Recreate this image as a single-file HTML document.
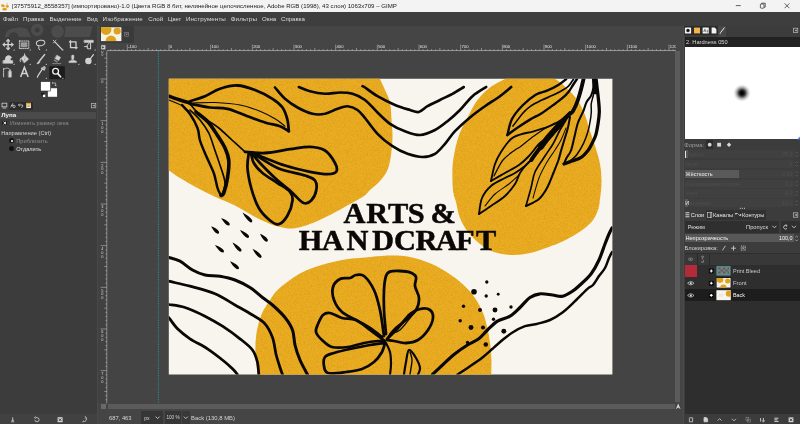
<!DOCTYPE html>
<html lang="ru"><head><meta charset="utf-8"><title>GIMP</title>
<style>
html,body{margin:0;padding:0;}
body{width:800px;height:424px;overflow:hidden;position:relative;background:#454545;font-family:"Liberation Sans",sans-serif;font-size:5.8px;color:#d8d8d8;}
.a{position:absolute;white-space:nowrap;line-height:1;}
.t{position:absolute;white-space:nowrap;line-height:8px;height:8px;opacity:.999;}
.b{position:absolute;}
svg{position:absolute;left:0;top:0;overflow:visible;opacity:.999;}
</style></head><body>
<div class="b" style="left:0.00px;top:0.00px;width:800.00px;height:12.00px;background:#f3f3f3;"></div>
<div class="t" style="left:12.00px;top:2.20px;font-size:6.10px;color:#1a1a1a;">[37575912_8558357] (импортировано)-1.0 (Цвета RGB 8 бит, нелинейное целочисленное, Adobe RGB (1998), 43 слоя) 1063x709 – GIMP</div>
<svg width="800" height="424" viewBox="0 0 800 424"><g fill="none" stroke="#222" stroke-width="0.7">
<path d="M735.8 5.6H740.8"/>
<rect x="760.4" y="4" width="3.6" height="4.2" rx="0.7"/><path d="M761.6 4V3.2H765.2V7.2H764.2"/>
<path d="M784.6 3.4L789.4 8.2M789.4 3.4L784.6 8.2"/>
<g stroke="none"><rect x="0.9" y="3" width="8.2" height="7.4" fill="#f4f2ee"/><ellipse cx="2.9" cy="5.7" rx="2" ry="1.4" fill="#e0a41a" transform="rotate(20 2.9 5.7)"/><ellipse cx="7.3" cy="6.3" rx="1.4" ry="1.5" fill="#e0a41a"/><ellipse cx="4.6" cy="9.2" rx="2.4" ry="1.2" fill="#dfa010"/><path d="M5.2 4.2L6.6 3.4L8.2 3L7.6 4.6Z" fill="#c9c9c9"/></g>
</g></svg>
<div class="b" style="left:0.00px;top:12.00px;width:800.00px;height:13.60px;background:#3e3e3e;"></div>
<div class="t" style="left:3.00px;top:15.20px;font-size:6.10px;color:#dadada;">Файл</div>
<div class="t" style="left:23.00px;top:15.20px;font-size:6.20px;letter-spacing:0.009px;color:#dadada;">Правка</div>
<div class="t" style="left:49.60px;top:15.20px;font-size:6.04px;color:#dadada;">Выделение</div>
<div class="t" style="left:87.00px;top:15.20px;font-size:5.86px;color:#dadada;">Вид</div>
<div class="t" style="left:102.60px;top:15.20px;font-size:6.20px;letter-spacing:0.122px;color:#dadada;">Изображение</div>
<div class="t" style="left:148.20px;top:15.20px;font-size:6.17px;color:#dadada;">Слой</div>
<div class="t" style="left:168.00px;top:15.20px;font-size:5.93px;color:#dadada;">Цвет</div>
<div class="t" style="left:186.00px;top:15.20px;font-size:6.20px;letter-spacing:0.122px;color:#dadada;">Инструменты</div>
<div class="t" style="left:230.75px;top:15.20px;font-size:6.20px;letter-spacing:0.145px;color:#dadada;">Фильтры</div>
<div class="t" style="left:262.00px;top:15.20px;font-size:6.11px;color:#dadada;">Окна</div>
<div class="t" style="left:281.00px;top:15.20px;font-size:6.12px;color:#dadada;">Справка</div>
<div class="b" style="left:0.00px;top:25.00px;width:97.40px;height:399.00px;background:#3c3c3c;"></div>
<div class="b" style="left:97.40px;top:25.00px;width:1.00px;height:399.00px;background:#494949;"></div>
<div class="b" style="left:9.00px;top:101.60px;width:23.80px;height:8.30px;background:#2b2b2b;"></div>
<div class="b" style="left:0.00px;top:111.60px;width:96.40px;height:7.00px;background:#4a4a4a;"></div>
<div class="t" style="left:1.20px;top:111.40px;font-size:6.20px;letter-spacing:0.001px;color:#f4f4f4;font-weight:bold;">Лупа</div>
<div class="b" style="left:2.40px;top:120.60px;width:4.80px;height:4.80px;background:#1f1f1f;border-radius:0.8px;"></div>
<div class="t" style="left:10.00px;top:119.00px;font-size:5.59px;color:#8c8c8c;">Изменять размер окна</div>
<div class="t" style="left:1.20px;top:128.80px;font-size:5.72px;color:#d4d4d4;">Направление (Ctrl)</div>
<div class="b" style="left:8.80px;top:137.90px;width:5.40px;height:5.40px;background:#141414;border-radius:50%;"></div>
<div class="b" style="left:10.50px;top:139.60px;width:2.00px;height:2.00px;background:#fff;border-radius:50%;"></div>
<div class="t" style="left:16.20px;top:136.70px;font-size:5.75px;color:#8c8c8c;">Приблизить</div>
<div class="b" style="left:8.80px;top:146.10px;width:5.40px;height:5.40px;background:#141414;border-radius:50%;"></div>
<div class="t" style="left:16.20px;top:144.90px;font-size:5.60px;color:#e2e2e2;">Отдалить</div>
<div class="b" style="left:0.00px;top:414.20px;width:96.50px;height:9.80px;background:#414141;"></div>
<div class="b" style="left:99.50px;top:25.60px;width:34.00px;height:17.00px;background:#3a3a3a;"></div>
<div class="b" style="left:98.40px;top:51.00px;width:9.00px;height:352.40px;background:#414141;"></div>
<div class="b" style="left:107.30px;top:51.00px;width:567.60px;height:352.40px;background:#444444;"></div>
<div class="b" style="left:107.50px;top:404.00px;width:567.40px;height:5.00px;background:#5b5b5b;"></div>
<div class="b" style="left:101.20px;top:403.80px;width:4.60px;height:5.20px;background:#6a6a6a;"></div>
<div class="b" style="left:675.20px;top:51.00px;width:5.30px;height:351.40px;background:#5b5b5b;"></div>
<div class="t" style="left:109.00px;top:414.00px;font-size:5.80px;color:#d4d4d4;">687, 463</div>
<div class="b" style="left:141.00px;top:411.40px;width:22.40px;height:12.60px;background:#363636;"></div>
<div class="t" style="left:144.20px;top:414.00px;font-size:5.11px;color:#d4d4d4;">px</div>
<div class="b" style="left:165.00px;top:411.40px;width:16.40px;height:12.60px;background:#363636;"></div>
<div class="t" style="left:166.40px;top:414.20px;font-size:4.65px;color:#d4d4d4;">100 %</div>
<div class="b" style="left:182.00px;top:411.40px;width:7.60px;height:12.60px;background:#383838;"></div>
<div class="t" style="left:191.00px;top:414.00px;font-size:5.92px;color:#d4d4d4;">Back (130,8 МБ)</div>
<div class="b" style="left:682.60px;top:25.00px;width:1.00px;height:399.00px;background:#4b4b4b;"></div>
<div class="b" style="left:683.60px;top:25.00px;width:117.00px;height:399.00px;background:#3c3c3c;"></div>
<div class="b" style="left:684.20px;top:26.40px;width:33.40px;height:8.20px;background:#2b2b2b;"></div>
<div class="b" style="left:717.60px;top:25.60px;width:8.60px;height:11.00px;background:#474747;"></div>
<div class="b" style="left:684.60px;top:36.60px;width:115.40px;height:10.40px;background:#222;"></div>
<div class="t" style="left:686.00px;top:37.80px;font-size:5.68px;color:#d8d8d8;">2. Hardness 050</div>
<div class="b" style="left:685.00px;top:47.00px;width:115.00px;height:92.40px;background:#fff;"></div>
<div class="b" style="left:732.60px;top:84.00px;width:18.00px;height:18.00px;background:radial-gradient(circle closest-side,#000 0%,#050505 16%,rgba(0,0,0,0.78) 36%,rgba(0,0,0,0.4) 56%,rgba(0,0,0,0.14) 76%,rgba(0,0,0,0.03) 90%,rgba(0,0,0,0) 100%);"></div>
<div class="t" style="left:684.20px;top:140.80px;font-size:5.89px;color:#9a9a9a;">Форма:</div>
<div class="b" style="left:706.00px;top:140.40px;width:7.40px;height:8.60px;background:#2c2c2c;"></div>
<div class="b" style="left:684.60px;top:150.10px;width:109.40px;height:8.40px;background:#404040;"></div>
<div class="b" style="left:684.60px;top:150.10px;width:3.20px;height:8.40px;background:#5a5a5a;"></div>
<div class="t" style="left:685.60px;top:150.30px;font-size:5.50px;color:#4e4e4e;">Радиус</div>
<div class="t" style="left:0.00px;top:150.30px;font-size:5.50px;color:#4e4e4e;left:auto;right:7.4px;">25,0</div>
<div class="b" style="left:684.60px;top:159.90px;width:109.40px;height:8.40px;background:#404040;"></div>
<div class="t" style="left:685.60px;top:160.10px;font-size:5.50px;color:#4e4e4e;">Лучи</div>
<div class="t" style="left:0.00px;top:160.10px;font-size:5.50px;color:#4e4e4e;left:auto;right:7.4px;">2</div>
<div class="b" style="left:684.60px;top:169.70px;width:109.40px;height:8.40px;background:#404040;"></div>
<div class="b" style="left:684.60px;top:169.70px;width:54.70px;height:8.40px;background:#5a5a5a;"></div>
<div class="t" style="left:685.60px;top:169.90px;font-size:5.50px;color:#f0f0f0;">Жёсткость</div>
<div class="t" style="left:0.00px;top:169.90px;font-size:5.50px;color:#4e4e4e;left:auto;right:7.4px;">0,50</div>
<div class="b" style="left:684.60px;top:179.50px;width:109.40px;height:8.40px;background:#404040;"></div>
<div class="t" style="left:685.60px;top:179.70px;font-size:5.50px;color:#4e4e4e;">Соотношение сторон</div>
<div class="t" style="left:0.00px;top:179.70px;font-size:5.50px;color:#4e4e4e;left:auto;right:7.4px;">1,0</div>
<div class="b" style="left:684.60px;top:189.20px;width:109.40px;height:8.40px;background:#404040;"></div>
<div class="t" style="left:685.60px;top:189.40px;font-size:5.50px;color:#4e4e4e;">Угол</div>
<div class="t" style="left:0.00px;top:189.40px;font-size:5.50px;color:#4e4e4e;left:auto;right:7.4px;">0,0</div>
<div class="b" style="left:684.60px;top:198.90px;width:109.40px;height:8.40px;background:#404040;"></div>
<div class="b" style="left:684.60px;top:198.90px;width:3.20px;height:8.40px;background:#5a5a5a;"></div>
<div class="t" style="left:685.60px;top:199.10px;font-size:5.50px;color:#4e4e4e;">Интервал</div>
<div class="t" style="left:0.00px;top:199.10px;font-size:5.50px;color:#4e4e4e;left:auto;right:7.4px;">10,0</div>
<div class="b" style="left:685.40px;top:150.60px;width:0.80px;height:7.40px;background:#e8e8e8;"></div>
<div class="t" style="left:685.20px;top:199.10px;font-size:5.50px;color:#e8e8e8;">И</div>
<div class="b" style="left:706.00px;top:210.40px;width:27.60px;height:9.20px;background:#313131;"></div>
<div class="b" style="left:734.60px;top:210.40px;width:31.60px;height:9.20px;background:#313131;"></div>
<div class="t" style="left:690.80px;top:211.20px;font-size:5.51px;color:#f0f0f0;">Слои</div>
<div class="t" style="left:713.00px;top:211.20px;font-size:5.63px;color:#e8e8e8;">Каналы</div>
<div class="t" style="left:742.00px;top:211.20px;font-size:5.71px;color:#e8e8e8;">Контуры</div>
<div class="b" style="left:684.60px;top:220.60px;width:94.40px;height:12.40px;background:#2f2f2f;border-radius:1px;"></div>
<div class="b" style="left:780.60px;top:220.60px;width:19.40px;height:12.40px;background:#2f2f2f;border-radius:1px;"></div>
<div class="t" style="left:687.70px;top:223.00px;font-size:5.58px;color:#dcdcdc;">Режим</div>
<div class="t" style="left:746.00px;top:223.00px;font-size:5.79px;color:#dcdcdc;">Пропуск</div>
<div class="b" style="left:684.60px;top:234.40px;width:109.40px;height:8.00px;background:#585858;"></div>
<div class="t" style="left:685.40px;top:234.40px;font-size:5.67px;color:#f4f4f4;">Непрозрачность</div>
<div class="t" style="left:779.00px;top:234.40px;font-size:5.43px;color:#f4f4f4;">100,0</div>
<div class="t" style="left:684.60px;top:244.20px;font-size:5.81px;color:#d4d4d4;">Блокировка:</div>
<div class="b" style="left:684.60px;top:253.00px;width:115.40px;height:160.60px;background:#2e2e2e;"></div>
<div class="b" style="left:684.60px;top:253.60px;width:115.40px;height:11.20px;background:#383838;"></div>
<div class="b" style="left:696.60px;top:253.60px;width:0.60px;height:11.20px;background:#2a2a2a;"></div>
<div class="b" style="left:708.60px;top:253.60px;width:0.60px;height:11.20px;background:#2a2a2a;"></div>
<div class="b" style="left:684.60px;top:264.80px;width:12.00px;height:12.20px;background:#b32a38;"></div>
<div class="b" style="left:684.60px;top:289.20px;width:115.40px;height:12.20px;background:#1d1d1d;"></div>
<div class="t" style="left:733.00px;top:267.00px;font-size:5.52px;color:#c8c8c8;">Print Bleed</div>
<div class="t" style="left:733.00px;top:279.20px;font-size:5.83px;color:#c8c8c8;">Front</div>
<div class="t" style="left:733.00px;top:291.40px;font-size:5.40px;color:#f4f4f4;">Back</div>
<svg width="800" height="424" viewBox="0 0 800 424">
<defs><clipPath id="hr"><rect x="107" y="43.4" width="569" height="8"/></clipPath><clipPath id="vr"><rect x="99.6" y="51" width="8" height="352.4"/></clipPath></defs>
<rect x="101" y="27.3" width="20.4" height="13.8" fill="#f6f2e8"/>
<g clip-path="url(#thc)"><clipPath id="thc"><rect x="101" y="27.3" width="20.4" height="13.8"/></clipPath><circle cx="106" cy="29.5" r="5.4" fill="#dfa21c"/><circle cx="117.2" cy="31" r="3.6" fill="#dfa21c"/><circle cx="111" cy="41" r="5.4" fill="#dfa21c"/></g>
<rect x="124.8" y="32.4" width="3.6" height="3.8" fill="none" stroke="#9a9a9a" stroke-width="0.5"/><path d="M125.8 33.5L127.4 35.1M127.4 33.5L125.8 35.1" stroke="#cfcfcf" stroke-width="0.5"/>
<rect x="101.2" y="45.2" width="4.2" height="4.2" fill="#cfcfcf"/><path d="M102.2 46.2L104.4 47.3L102.2 48.4Z" fill="#333"/>
<g clip-path="url(#hr)" stroke="#d0d0d0" stroke-width="0.5" fill="#cfcfcf" font-size="4.2" font-family="'Liberation Sans',sans-serif">
<path d="M107 50.6H676" stroke-width="0.6"/>
<path d="M85.67 44.6V50.6"/>
<text x="86.47" y="48.1" stroke="none" fill="#e4e4e4">-200</text>
<path d="M89.83 49.20V50.6"/>
<path d="M94.00 49.20V50.6"/>
<path d="M98.17 49.20V50.6"/>
<path d="M102.33 49.20V50.6"/>
<path d="M106.50 48.00V50.6"/>
<path d="M110.67 49.20V50.6"/>
<path d="M114.83 49.20V50.6"/>
<path d="M119.00 49.20V50.6"/>
<path d="M123.17 49.20V50.6"/>
<path d="M127.33 44.6V50.6"/>
<text x="128.13" y="48.1" stroke="none" fill="#e4e4e4">-100</text>
<path d="M131.50 49.20V50.6"/>
<path d="M135.67 49.20V50.6"/>
<path d="M139.83 49.20V50.6"/>
<path d="M144.00 49.20V50.6"/>
<path d="M148.17 48.00V50.6"/>
<path d="M152.33 49.20V50.6"/>
<path d="M156.50 49.20V50.6"/>
<path d="M160.67 49.20V50.6"/>
<path d="M164.83 49.20V50.6"/>
<path d="M169.00 44.6V50.6"/>
<text x="169.80" y="48.1" stroke="none" fill="#e4e4e4">0</text>
<path d="M173.17 49.20V50.6"/>
<path d="M177.33 49.20V50.6"/>
<path d="M181.50 49.20V50.6"/>
<path d="M185.67 49.20V50.6"/>
<path d="M189.83 48.00V50.6"/>
<path d="M194.00 49.20V50.6"/>
<path d="M198.17 49.20V50.6"/>
<path d="M202.33 49.20V50.6"/>
<path d="M206.50 49.20V50.6"/>
<path d="M210.67 44.6V50.6"/>
<text x="211.47" y="48.1" stroke="none" fill="#e4e4e4">100</text>
<path d="M214.83 49.20V50.6"/>
<path d="M219.00 49.20V50.6"/>
<path d="M223.17 49.20V50.6"/>
<path d="M227.33 49.20V50.6"/>
<path d="M231.50 48.00V50.6"/>
<path d="M235.67 49.20V50.6"/>
<path d="M239.83 49.20V50.6"/>
<path d="M244.00 49.20V50.6"/>
<path d="M248.17 49.20V50.6"/>
<path d="M252.33 44.6V50.6"/>
<text x="253.13" y="48.1" stroke="none" fill="#e4e4e4">200</text>
<path d="M256.50 49.20V50.6"/>
<path d="M260.67 49.20V50.6"/>
<path d="M264.83 49.20V50.6"/>
<path d="M269.00 49.20V50.6"/>
<path d="M273.17 48.00V50.6"/>
<path d="M277.33 49.20V50.6"/>
<path d="M281.50 49.20V50.6"/>
<path d="M285.67 49.20V50.6"/>
<path d="M289.83 49.20V50.6"/>
<path d="M294.00 44.6V50.6"/>
<text x="294.80" y="48.1" stroke="none" fill="#e4e4e4">300</text>
<path d="M298.17 49.20V50.6"/>
<path d="M302.33 49.20V50.6"/>
<path d="M306.50 49.20V50.6"/>
<path d="M310.67 49.20V50.6"/>
<path d="M314.83 48.00V50.6"/>
<path d="M319.00 49.20V50.6"/>
<path d="M323.17 49.20V50.6"/>
<path d="M327.33 49.20V50.6"/>
<path d="M331.50 49.20V50.6"/>
<path d="M335.67 44.6V50.6"/>
<text x="336.47" y="48.1" stroke="none" fill="#e4e4e4">400</text>
<path d="M339.83 49.20V50.6"/>
<path d="M344.00 49.20V50.6"/>
<path d="M348.17 49.20V50.6"/>
<path d="M352.33 49.20V50.6"/>
<path d="M356.50 48.00V50.6"/>
<path d="M360.67 49.20V50.6"/>
<path d="M364.83 49.20V50.6"/>
<path d="M369.00 49.20V50.6"/>
<path d="M373.17 49.20V50.6"/>
<path d="M377.34 44.6V50.6"/>
<text x="378.14" y="48.1" stroke="none" fill="#e4e4e4">500</text>
<path d="M381.50 49.20V50.6"/>
<path d="M385.67 49.20V50.6"/>
<path d="M389.84 49.20V50.6"/>
<path d="M394.00 49.20V50.6"/>
<path d="M398.17 48.00V50.6"/>
<path d="M402.34 49.20V50.6"/>
<path d="M406.50 49.20V50.6"/>
<path d="M410.67 49.20V50.6"/>
<path d="M414.84 49.20V50.6"/>
<path d="M419.00 44.6V50.6"/>
<text x="419.80" y="48.1" stroke="none" fill="#e4e4e4">600</text>
<path d="M423.17 49.20V50.6"/>
<path d="M427.34 49.20V50.6"/>
<path d="M431.50 49.20V50.6"/>
<path d="M435.67 49.20V50.6"/>
<path d="M439.84 48.00V50.6"/>
<path d="M444.00 49.20V50.6"/>
<path d="M448.17 49.20V50.6"/>
<path d="M452.34 49.20V50.6"/>
<path d="M456.50 49.20V50.6"/>
<path d="M460.67 44.6V50.6"/>
<text x="461.47" y="48.1" stroke="none" fill="#e4e4e4">700</text>
<path d="M464.84 49.20V50.6"/>
<path d="M469.00 49.20V50.6"/>
<path d="M473.17 49.20V50.6"/>
<path d="M477.34 49.20V50.6"/>
<path d="M481.50 48.00V50.6"/>
<path d="M485.67 49.20V50.6"/>
<path d="M489.84 49.20V50.6"/>
<path d="M494.00 49.20V50.6"/>
<path d="M498.17 49.20V50.6"/>
<path d="M502.34 44.6V50.6"/>
<text x="503.14" y="48.1" stroke="none" fill="#e4e4e4">800</text>
<path d="M506.50 49.20V50.6"/>
<path d="M510.67 49.20V50.6"/>
<path d="M514.84 49.20V50.6"/>
<path d="M519.00 49.20V50.6"/>
<path d="M523.17 48.00V50.6"/>
<path d="M527.34 49.20V50.6"/>
<path d="M531.50 49.20V50.6"/>
<path d="M535.67 49.20V50.6"/>
<path d="M539.84 49.20V50.6"/>
<path d="M544.00 44.6V50.6"/>
<text x="544.80" y="48.1" stroke="none" fill="#e4e4e4">900</text>
<path d="M548.17 49.20V50.6"/>
<path d="M552.34 49.20V50.6"/>
<path d="M556.50 49.20V50.6"/>
<path d="M560.67 49.20V50.6"/>
<path d="M564.84 48.00V50.6"/>
<path d="M569.00 49.20V50.6"/>
<path d="M573.17 49.20V50.6"/>
<path d="M577.34 49.20V50.6"/>
<path d="M581.50 49.20V50.6"/>
<path d="M585.67 44.6V50.6"/>
<text x="586.47" y="48.1" stroke="none" fill="#e4e4e4">1000</text>
<path d="M589.84 49.20V50.6"/>
<path d="M594.00 49.20V50.6"/>
<path d="M598.17 49.20V50.6"/>
<path d="M602.34 49.20V50.6"/>
<path d="M606.50 48.00V50.6"/>
<path d="M610.67 49.20V50.6"/>
<path d="M614.84 49.20V50.6"/>
<path d="M619.00 49.20V50.6"/>
<path d="M623.17 49.20V50.6"/>
<path d="M627.34 44.6V50.6"/>
<text x="628.14" y="48.1" stroke="none" fill="#e4e4e4">1100</text>
<path d="M631.50 49.20V50.6"/>
<path d="M635.67 49.20V50.6"/>
<path d="M639.84 49.20V50.6"/>
<path d="M644.00 49.20V50.6"/>
<path d="M648.17 48.00V50.6"/>
<path d="M652.34 49.20V50.6"/>
<path d="M656.50 49.20V50.6"/>
<path d="M660.67 49.20V50.6"/>
<path d="M664.84 49.20V50.6"/>
<path d="M669.00 44.6V50.6"/>
<text x="669.80" y="48.1" stroke="none" fill="#e4e4e4">1200</text>
<path d="M673.17 49.20V50.6"/>
<path d="M677.34 49.20V50.6"/>
<path d="M681.50 49.20V50.6"/>
<path d="M685.67 49.20V50.6"/>
<path d="M689.84 48.00V50.6"/>
<path d="M694.00 49.20V50.6"/>
<path d="M698.17 49.20V50.6"/>
<path d="M702.34 49.20V50.6"/>
<path d="M706.50 49.20V50.6"/>
</g>
<g clip-path="url(#vr)" stroke="#d0d0d0" stroke-width="0.5" fill="#d8d8d8" font-size="3.9" font-family="'Liberation Sans',sans-serif">
<path d="M106.9 51V403.4" stroke-width="0.6"/>
<path d="M100.6 37.33H106.9"/>
<text x="101.2" y="41.53" stroke="none">-</text>
<text x="101.2" y="45.43" stroke="none">1</text>
<text x="101.2" y="49.33" stroke="none">0</text>
<text x="101.2" y="53.23" stroke="none">0</text>
<path d="M105.50 41.50H106.9"/>
<path d="M105.50 45.67H106.9"/>
<path d="M105.50 49.83H106.9"/>
<path d="M105.50 54.00H106.9"/>
<path d="M104.30 58.17H106.9"/>
<path d="M105.50 62.33H106.9"/>
<path d="M105.50 66.50H106.9"/>
<path d="M105.50 70.67H106.9"/>
<path d="M105.50 74.83H106.9"/>
<path d="M100.6 79.00H106.9"/>
<text x="101.2" y="83.20" stroke="none">0</text>
<path d="M105.50 83.17H106.9"/>
<path d="M105.50 87.33H106.9"/>
<path d="M105.50 91.50H106.9"/>
<path d="M105.50 95.67H106.9"/>
<path d="M104.30 99.83H106.9"/>
<path d="M105.50 104.00H106.9"/>
<path d="M105.50 108.17H106.9"/>
<path d="M105.50 112.33H106.9"/>
<path d="M105.50 116.50H106.9"/>
<path d="M100.6 120.67H106.9"/>
<text x="101.2" y="124.87" stroke="none">1</text>
<text x="101.2" y="128.77" stroke="none">0</text>
<text x="101.2" y="132.67" stroke="none">0</text>
<path d="M105.50 124.83H106.9"/>
<path d="M105.50 129.00H106.9"/>
<path d="M105.50 133.17H106.9"/>
<path d="M105.50 137.33H106.9"/>
<path d="M104.30 141.50H106.9"/>
<path d="M105.50 145.67H106.9"/>
<path d="M105.50 149.83H106.9"/>
<path d="M105.50 154.00H106.9"/>
<path d="M105.50 158.17H106.9"/>
<path d="M100.6 162.33H106.9"/>
<text x="101.2" y="166.53" stroke="none">2</text>
<text x="101.2" y="170.43" stroke="none">0</text>
<text x="101.2" y="174.33" stroke="none">0</text>
<path d="M105.50 166.50H106.9"/>
<path d="M105.50 170.67H106.9"/>
<path d="M105.50 174.83H106.9"/>
<path d="M105.50 179.00H106.9"/>
<path d="M104.30 183.17H106.9"/>
<path d="M105.50 187.33H106.9"/>
<path d="M105.50 191.50H106.9"/>
<path d="M105.50 195.67H106.9"/>
<path d="M105.50 199.83H106.9"/>
<path d="M100.6 204.00H106.9"/>
<text x="101.2" y="208.20" stroke="none">3</text>
<text x="101.2" y="212.10" stroke="none">0</text>
<text x="101.2" y="216.00" stroke="none">0</text>
<path d="M105.50 208.17H106.9"/>
<path d="M105.50 212.33H106.9"/>
<path d="M105.50 216.50H106.9"/>
<path d="M105.50 220.67H106.9"/>
<path d="M104.30 224.83H106.9"/>
<path d="M105.50 229.00H106.9"/>
<path d="M105.50 233.17H106.9"/>
<path d="M105.50 237.33H106.9"/>
<path d="M105.50 241.50H106.9"/>
<path d="M100.6 245.67H106.9"/>
<text x="101.2" y="249.87" stroke="none">4</text>
<text x="101.2" y="253.77" stroke="none">0</text>
<text x="101.2" y="257.67" stroke="none">0</text>
<path d="M105.50 249.83H106.9"/>
<path d="M105.50 254.00H106.9"/>
<path d="M105.50 258.17H106.9"/>
<path d="M105.50 262.33H106.9"/>
<path d="M104.30 266.50H106.9"/>
<path d="M105.50 270.67H106.9"/>
<path d="M105.50 274.83H106.9"/>
<path d="M105.50 279.00H106.9"/>
<path d="M105.50 283.17H106.9"/>
<path d="M100.6 287.34H106.9"/>
<text x="101.2" y="291.54" stroke="none">5</text>
<text x="101.2" y="295.44" stroke="none">0</text>
<text x="101.2" y="299.34" stroke="none">0</text>
<path d="M105.50 291.50H106.9"/>
<path d="M105.50 295.67H106.9"/>
<path d="M105.50 299.84H106.9"/>
<path d="M105.50 304.00H106.9"/>
<path d="M104.30 308.17H106.9"/>
<path d="M105.50 312.34H106.9"/>
<path d="M105.50 316.50H106.9"/>
<path d="M105.50 320.67H106.9"/>
<path d="M105.50 324.84H106.9"/>
<path d="M100.6 329.00H106.9"/>
<text x="101.2" y="333.20" stroke="none">6</text>
<text x="101.2" y="337.10" stroke="none">0</text>
<text x="101.2" y="341.00" stroke="none">0</text>
<path d="M105.50 333.17H106.9"/>
<path d="M105.50 337.34H106.9"/>
<path d="M105.50 341.50H106.9"/>
<path d="M105.50 345.67H106.9"/>
<path d="M104.30 349.84H106.9"/>
<path d="M105.50 354.00H106.9"/>
<path d="M105.50 358.17H106.9"/>
<path d="M105.50 362.34H106.9"/>
<path d="M105.50 366.50H106.9"/>
<path d="M100.6 370.67H106.9"/>
<text x="101.2" y="374.87" stroke="none">7</text>
<text x="101.2" y="378.77" stroke="none">0</text>
<text x="101.2" y="382.67" stroke="none">0</text>
<path d="M105.50 374.84H106.9"/>
<path d="M105.50 379.00H106.9"/>
<path d="M105.50 383.17H106.9"/>
<path d="M105.50 387.34H106.9"/>
<path d="M104.30 391.50H106.9"/>
<path d="M105.50 395.67H106.9"/>
<path d="M105.50 399.84H106.9"/>
<path d="M105.50 404.00H106.9"/>
<path d="M105.50 408.17H106.9"/>
<path d="M100.6 412.34H106.9"/>
<text x="101.2" y="416.54" stroke="none">8</text>
<text x="101.2" y="420.44" stroke="none">0</text>
<text x="101.2" y="424.34" stroke="none">0</text>
<path d="M105.50 416.50H106.9"/>
<path d="M105.50 420.67H106.9"/>
<path d="M105.50 424.84H106.9"/>
<path d="M105.50 429.00H106.9"/>
<path d="M104.30 433.17H106.9"/>
<path d="M105.50 437.34H106.9"/>
<path d="M105.50 441.50H106.9"/>
<path d="M105.50 445.67H106.9"/>
<path d="M105.50 449.84H106.9"/>
</g>
<text x="101.6" y="55.6" font-size="3.3" fill="#cfcfcf" font-family="'Liberation Sans',sans-serif">0</text>
<path d="M158.4 51V403.4" stroke="#1fb5b5" stroke-width="0.7" stroke-dasharray="1.2 1.2"/>
<g fill="none" stroke="#e0e0e0" stroke-width="0.8"><path d="M155.6 416.6L157.6 418.6L159.6 416.6M183.8 416.6L185.8 418.6L187.8 416.6"/></g>
<path d="M675.8 409.2L678.2 403.6L680.6 409.2L678.2 407.4Z" fill="#d8d8d8"/>
</svg>
<svg class="a" style="left:0;top:0" width="800" height="424" viewBox="0 0 800 424">
<defs><filter id="grain" x="0" y="0" width="100%" height="100%" color-interpolation-filters="sRGB"><feTurbulence type="fractalNoise" baseFrequency="1.3" numOctaves="2" seed="4" result="n"/><feColorMatrix in="n" type="matrix" values="0 0 0 0 0.62  0 0 0 0 0.38  0 0 0 0 0.02  0 0 0 0.46 -0.18" result="d0"/><feGaussianBlur in="d0" stdDeviation="0.45" result="d"/><feComposite in="d" in2="SourceGraphic" operator="in" result="dd"/><feMerge><feMergeNode in="SourceGraphic"/><feMergeNode in="dd"/></feMerge></filter><clipPath id="artclip"><rect x="168.8" y="78.8" width="443.6" height="295.7"/></clipPath></defs>
<g clip-path="url(#artclip)">
<rect x="168" y="78" width="445" height="297" fill="#f8f5ee"/>
<g filter="url(#grain)">
<path d="M160.0 70.0C196.0 54.2 339.3 68.5 376.0 70.0C412.7 71.5 378.5 75.7 380.0 79.0C381.5 82.3 383.3 86.1 385.0 90.0C386.7 93.9 388.9 97.5 390.0 102.5C391.1 107.5 391.1 114.2 391.5 120.0C391.9 125.8 392.6 131.7 392.5 137.5C392.4 143.3 391.8 149.6 391.0 155.0C390.2 160.4 389.3 165.7 387.5 170.0C385.7 174.3 382.9 177.7 380.0 181.0C377.1 184.3 372.7 187.5 370.0 190.0C367.3 192.5 367.3 193.7 364.0 196.0C360.7 198.3 355.7 200.8 350.0 204.0C344.3 207.2 336.7 211.7 330.0 215.0C323.3 218.3 315.7 221.8 310.0 224.0C304.3 226.2 300.2 227.3 296.0 228.0C291.8 228.7 289.3 228.7 285.0 228.0C280.7 227.3 275.4 226.1 270.0 224.0C264.6 221.9 258.3 218.6 252.5 215.5C246.7 212.4 241.2 208.6 235.0 205.5C228.8 202.4 221.2 199.7 215.0 196.8C208.8 193.8 203.3 191.1 197.5 188.0C191.7 184.9 184.8 180.9 180.0 178.0C175.2 175.1 172.3 172.7 169.0 170.5C165.7 168.3 161.5 181.8 160.0 165.0C158.5 148.2 124.0 85.8 160.0 70.0Z" fill="#ebae22"/>
<path d="M505.0 79.0C511.7 75.4 521.7 66.0 530.0 66.0C538.3 66.0 548.8 75.2 555.0 79.0C561.2 82.8 563.7 85.3 567.5 89.0C571.3 92.7 575.1 96.7 578.0 101.0C580.9 105.3 583.0 110.0 585.0 115.0C587.0 120.0 588.3 125.8 590.0 131.0C591.7 136.2 593.3 140.5 595.0 146.0C596.7 151.5 598.9 158.0 600.0 164.0C601.1 170.0 601.5 176.2 601.5 182.0C601.5 187.8 600.6 194.3 600.0 199.0C599.4 203.7 599.2 206.5 598.0 210.0C596.8 213.5 595.2 217.0 593.0 220.0C590.8 223.0 588.3 225.3 585.0 228.0C581.7 230.7 577.3 233.5 573.0 236.0C568.7 238.5 563.5 241.0 559.0 243.0C554.5 245.0 550.8 246.3 546.0 248.0C541.2 249.7 535.7 251.8 530.0 253.0C524.3 254.2 518.0 255.2 512.0 255.0C506.0 254.8 499.3 253.8 494.0 252.0C488.7 250.2 484.3 247.3 480.0 244.0C475.7 240.7 471.3 236.3 468.0 232.0C464.7 227.7 462.0 223.0 460.0 218.0C458.0 213.0 457.2 206.7 456.0 202.0C454.8 197.3 453.6 195.8 453.0 190.0C452.4 184.2 452.2 174.2 452.5 167.5C452.8 160.8 453.8 155.8 455.0 150.0C456.2 144.2 457.9 137.9 460.0 132.5C462.1 127.1 464.6 122.9 467.5 117.5C470.4 112.1 473.8 105.0 477.5 100.0C481.2 95.0 485.4 91.0 490.0 87.5C494.6 84.0 498.3 82.6 505.0 79.0Z" fill="#ebae22"/>
<path d="M257.5 374.5C257.1 368.7 255.7 361.6 255.5 355.0C255.3 348.4 255.3 341.7 256.2 335.0C257.2 328.3 259.0 320.8 261.2 315.0C263.5 309.2 267.3 304.2 270.0 300.0C272.7 295.8 274.2 293.3 277.5 290.0C280.8 286.7 285.4 283.2 290.0 280.0C294.6 276.8 299.2 273.7 305.0 271.0C310.8 268.3 318.3 265.9 325.0 264.0C331.7 262.1 338.3 260.6 345.0 259.5C351.7 258.4 357.5 258.1 365.0 257.5C372.5 256.9 383.5 255.8 390.0 255.6C396.5 255.3 399.3 255.4 404.0 256.0C408.7 256.6 413.0 257.5 418.0 259.0C423.0 260.5 429.0 262.7 434.0 265.0C439.0 267.3 443.2 269.8 448.0 273.0C452.8 276.2 458.0 279.8 462.5 284.0C467.0 288.2 471.5 292.8 475.0 298.0C478.5 303.2 481.5 308.8 483.8 315.0C486.0 321.2 487.5 328.3 488.8 335.0C490.0 341.7 490.8 348.4 491.2 355.0C491.7 361.6 491.3 368.7 491.2 374.5C491.2 380.3 529.9 387.4 491.0 390.0C452.1 392.6 296.9 392.6 258.0 390.0C219.1 387.4 257.9 380.3 257.5 374.5Z" fill="#ebae22"/>
</g>
<g fill="none" stroke="#0a0806" stroke-linecap="round" stroke-linejoin="round">
<path d="M168.8 96.2C170.6 96.9 176.5 98.9 180.0 100.0C183.5 101.1 188.3 102.5 190.0 103.0" stroke-width="3.59"/>
<path d="M169.0 100.0C171.2 101.0 179.0 103.9 182.5 106.0C186.0 108.1 188.8 111.4 190.0 112.5" stroke-width="1.10"/>
<path d="M190.0 101.2C192.5 100.4 200.0 98.3 205.0 96.2C210.0 94.2 214.6 90.5 220.0 88.8C225.4 87.0 231.7 85.3 237.5 85.5C243.3 85.7 249.2 87.8 255.0 90.0C260.8 92.2 267.9 95.8 272.5 98.8C277.1 101.7 280.0 104.0 282.5 107.5C285.0 111.0 286.5 116.0 287.5 120.0C288.5 124.0 288.5 129.4 288.8 131.2" stroke-width="2.76"/>
<path d="M190.0 103.8C193.3 104.4 203.8 106.7 210.0 107.5C216.2 108.3 221.2 107.3 227.5 108.8C233.8 110.2 241.2 114.0 247.5 116.2C253.8 118.5 259.6 120.8 265.0 122.5C270.4 124.2 276.0 124.8 280.0 126.2C284.0 127.7 287.3 130.4 288.8 131.2" stroke-width="2.76"/>
<path d="M192.5 103.0C196.2 102.9 207.1 102.2 215.0 102.5C222.9 102.8 232.5 103.5 240.0 105.0C247.5 106.5 254.2 109.0 260.0 111.2C265.8 113.5 270.8 116.2 275.0 118.8C279.2 121.2 283.3 125.0 285.0 126.2" stroke-width="1.10"/>
<path d="M190.0 103.8C191.2 105.1 194.2 109.3 197.0 112.0C199.8 114.7 203.4 117.3 207.0 120.0C210.6 122.7 214.5 124.6 218.8 128.0C223.0 131.4 228.1 136.5 232.5 140.5C236.9 144.5 242.9 149.9 245.0 151.8" stroke-width="1.66"/>
<path d="M182.0 105.0C183.3 106.5 187.4 110.2 190.0 114.0C192.6 117.8 195.8 123.6 197.5 128.0C199.2 132.4 198.6 135.9 200.0 140.5C201.4 145.1 203.7 150.1 206.0 155.5C208.3 160.9 211.8 167.6 213.8 173.0C215.7 178.4 216.3 184.2 217.5 188.0C218.7 191.8 220.4 194.2 221.0 195.5" stroke-width="2.48"/>
<path d="M190.0 110.0C191.7 111.7 196.9 116.2 200.0 120.0C203.1 123.8 206.2 127.9 208.8 133.0C211.2 138.1 213.0 144.7 215.0 150.5C217.0 156.3 219.3 162.6 221.0 168.0C222.7 173.4 224.8 178.5 225.0 183.0C225.2 187.5 222.5 193.0 222.0 195.0" stroke-width="1.66"/>
<path d="M196.0 112.0C198.0 113.7 204.4 118.1 208.0 122.0C211.6 125.9 214.7 131.2 217.5 135.5C220.3 139.8 223.1 143.8 225.0 148.0C226.9 152.2 228.3 155.5 228.8 160.5C229.2 165.5 228.3 172.6 227.5 178.0C226.7 183.4 224.8 190.1 223.8 193.0C222.7 195.9 221.5 195.1 221.0 195.5" stroke-width="3.59"/>
<path d="M245.0 151.8C248.3 152.0 257.5 153.4 265.0 153.0C272.5 152.6 282.5 150.3 290.0 149.2C297.5 148.2 304.2 146.5 310.0 146.8C315.8 147.0 320.8 147.8 325.0 150.5C329.2 153.2 333.1 159.5 335.0 163.0C336.9 166.5 337.5 169.9 336.2 171.8C335.0 173.6 331.9 174.2 327.5 174.2C323.1 174.2 317.1 173.2 310.0 171.8C302.9 170.3 292.5 167.8 285.0 165.5C277.5 163.2 270.6 160.1 265.0 158.0C259.4 155.9 253.5 153.8 251.2 153.0" stroke-width="2.76"/>
<path d="M252.5 153.0C256.7 155.5 268.8 164.2 277.5 168.0C286.2 171.8 298.8 173.4 305.0 175.5C311.2 177.6 313.1 178.0 315.0 180.5C316.9 183.0 316.9 187.2 316.2 190.5C315.6 193.8 313.3 198.4 311.2 200.5C309.2 202.6 306.5 203.8 303.8 203.0C301.0 202.2 297.3 197.6 295.0 195.5C292.7 193.4 293.3 193.4 290.0 190.5C286.7 187.6 280.0 182.6 275.0 178.0C270.0 173.4 263.8 167.0 260.0 163.0C256.2 159.0 253.8 155.7 252.5 154.2" stroke-width="2.76"/>
<path d="M248.8 153.0C248.5 155.5 247.1 162.2 247.5 168.0C247.9 173.8 249.4 181.3 251.2 188.0C253.1 194.7 255.6 202.6 258.8 208.0C261.9 213.4 266.7 217.8 270.0 220.5C273.3 223.2 275.8 225.1 278.8 224.2C281.7 223.4 285.2 219.5 287.5 215.5C289.8 211.5 292.1 204.5 292.5 200.5C292.9 196.5 292.5 194.7 290.0 191.8C287.5 188.8 282.1 186.1 277.5 183.0C272.9 179.9 266.5 176.3 262.5 173.0C258.5 169.7 255.6 166.1 253.8 163.0C251.9 159.9 251.7 155.7 251.2 154.2" stroke-width="2.76"/>
<path d="M275.0 87.5C276.7 89.4 281.2 95.4 285.0 98.8C288.8 102.1 292.9 105.0 297.5 107.5C302.1 110.0 307.9 112.7 312.5 113.8C317.1 114.8 320.8 114.6 325.0 113.8C329.2 112.9 333.8 110.0 337.5 108.8C341.2 107.5 344.2 106.0 347.5 106.2C350.8 106.5 354.6 108.0 357.5 110.0C360.4 112.0 361.7 114.0 365.0 118.0C368.3 122.0 372.9 129.0 377.5 133.8C382.1 138.5 387.5 142.9 392.5 146.2C397.5 149.6 402.5 152.0 407.5 153.8C412.5 155.5 417.9 157.0 422.5 157.0C427.1 157.0 431.2 156.0 435.0 153.8C438.8 151.5 441.7 147.5 445.0 143.8C448.3 140.0 450.8 135.6 455.0 131.2C459.2 126.9 465.0 121.7 470.0 117.5C475.0 113.3 480.0 109.8 485.0 106.2C490.0 102.7 495.6 99.5 500.0 96.2C504.4 93.0 509.4 88.5 511.2 87.0" stroke-width="2.62"/>
<path d="M298.8 87.0C300.6 87.7 305.6 90.1 310.0 91.2C314.4 92.4 320.0 93.5 325.0 93.8C330.0 94.0 335.4 92.5 340.0 92.5C344.6 92.5 348.3 92.5 352.5 93.8C356.7 95.0 360.8 96.9 365.0 100.0C369.2 103.1 373.3 108.5 377.5 112.5C381.7 116.5 385.4 120.6 390.0 123.8C394.6 126.9 400.0 129.4 405.0 131.2C410.0 133.1 415.0 135.2 420.0 135.0C425.0 134.8 430.4 132.3 435.0 130.0C439.6 127.7 443.3 124.6 447.5 121.2C451.7 117.9 455.8 114.2 460.0 110.0C464.2 105.8 468.1 100.1 472.5 96.2C476.9 92.4 484.0 88.5 486.2 87.0" stroke-width="2.62"/>
<path d="M362.5 86.2C362.9 86.5 362.5 85.8 365.0 87.5C367.5 89.2 372.5 93.3 377.5 96.2C382.5 99.2 389.6 102.7 395.0 105.0C400.4 107.3 406.0 108.8 410.0 110.0C414.0 111.2 415.8 112.6 418.8 112.0C421.7 111.4 424.0 108.2 427.5 106.2C431.0 104.2 435.8 102.1 440.0 100.0C444.2 97.9 448.5 95.9 452.5 93.8C456.5 91.6 461.9 88.1 463.8 87.0" stroke-width="2.62"/>
<path d="M507.4 135.0C508.2 132.3 509.4 124.0 512.0 119.0C514.6 114.0 519.0 109.0 523.0 105.0C527.0 101.0 531.7 97.1 535.7 94.7C539.7 92.3 543.2 92.3 547.0 90.7C550.8 89.1 555.1 87.0 558.3 85.0C561.5 83.0 564.9 80.0 566.2 79.0" stroke-width="2.42"/>
<path d="M513.0 126.0C514.7 123.8 520.2 116.2 523.0 113.0C525.8 109.8 527.0 108.7 530.0 106.6C533.0 104.5 537.5 102.2 541.3 100.3C545.1 98.4 549.3 96.9 552.7 95.3C556.1 93.7 559.1 92.2 561.7 90.7C564.3 89.2 566.5 88.2 568.5 86.2C570.5 84.2 572.8 80.2 573.6 79.0" stroke-width="1.66"/>
<path d="M507.4 135.0C509.0 133.8 513.2 130.6 517.0 128.0C520.8 125.4 526.0 122.0 530.0 119.6C534.0 117.2 537.5 115.8 541.3 113.4C545.1 111.0 549.3 107.9 552.7 105.4C556.1 103.0 559.1 101.0 561.7 98.7C564.3 96.5 566.6 94.2 568.5 91.9C570.4 89.6 571.6 87.2 573.0 85.0C574.4 82.8 576.3 80.0 577.0 79.0" stroke-width="2.42"/>
<path d="M583.8 78.0C583.3 79.9 582.0 85.8 581.0 89.6C580.0 93.4 578.9 97.3 577.6 100.9C576.3 104.5 574.3 108.9 573.0 111.1C571.7 113.3 571.3 112.5 569.8 114.0C568.3 115.5 566.1 117.7 564.0 120.0C561.9 122.3 560.0 125.1 557.4 127.9C554.8 130.7 550.9 134.0 548.3 137.0C545.6 140.0 543.8 143.0 541.5 146.0C539.2 149.0 536.4 152.7 534.7 155.0C533.0 157.3 531.9 159.2 531.3 160.0" stroke-width="3.86"/>
<path d="M560.0 124.0C558.7 125.5 554.3 130.3 552.0 133.0C549.7 135.7 547.8 137.7 546.0 140.0C544.2 142.3 541.8 145.8 541.0 147.0" stroke-width="5.80"/>
<path d="M491.0 181.0C491.7 178.2 493.3 168.8 495.0 164.0C496.7 159.2 498.3 156.2 501.0 152.0C503.7 147.8 507.8 141.9 511.0 139.0C514.2 136.1 516.2 135.9 520.0 134.6C523.8 133.3 528.9 132.6 533.6 131.3C538.3 130.0 544.0 128.4 548.3 126.7C552.6 125.0 556.0 123.5 559.6 121.0C563.2 118.5 568.1 113.5 569.8 112.0" stroke-width="1.88"/>
<path d="M494.0 176.0C495.5 173.3 499.5 164.3 503.0 160.0C506.5 155.7 512.2 152.2 515.0 150.0C517.8 147.8 517.3 149.0 520.0 147.0C522.7 145.0 527.5 140.8 531.3 138.0C535.1 135.2 538.6 132.5 542.6 130.0C546.6 127.5 552.9 124.2 555.0 123.0" stroke-width="1.21"/>
<path d="M491.0 181.0C493.3 179.7 500.3 175.7 505.0 173.0C509.7 170.3 515.0 167.8 519.0 165.0C523.0 162.2 525.7 159.5 529.0 156.0C532.3 152.5 535.8 147.2 539.0 144.0C542.2 140.8 546.5 138.2 548.0 137.0" stroke-width="1.88"/>
<path d="M479.0 214.0C479.5 211.3 480.0 202.7 482.0 198.0C484.0 193.3 487.2 189.3 491.0 186.0C494.8 182.7 501.0 180.2 505.0 178.0C509.0 175.8 511.7 175.0 515.0 173.0C518.3 171.0 522.3 168.2 525.0 166.0C527.7 163.8 530.2 161.0 531.3 160.0" stroke-width="1.88"/>
<path d="M485.0 206.0C486.7 204.0 491.0 197.7 495.0 194.0C499.0 190.3 505.2 187.0 509.0 184.0C512.8 181.0 516.5 177.3 518.0 176.0" stroke-width="1.03"/>
<path d="M479.0 214.0C481.0 212.7 486.7 209.0 491.0 206.0C495.3 203.0 501.0 199.7 505.0 196.0C509.0 192.3 512.5 187.8 515.0 184.0C517.5 180.2 518.0 176.3 520.0 173.0C522.0 169.7 525.1 166.2 527.0 164.0C528.9 161.8 530.6 160.7 531.3 160.0" stroke-width="1.88"/>
<path d="M526.0 206.0C526.8 203.0 529.5 193.7 531.0 188.0C532.5 182.3 532.7 177.3 535.0 172.0C537.3 166.7 542.0 160.7 545.0 156.0C548.0 151.3 550.5 148.3 553.0 144.0C555.5 139.7 557.8 134.0 560.0 130.0C562.2 126.0 564.4 122.8 566.0 120.0C567.6 117.2 569.2 114.2 569.8 113.0" stroke-width="1.68"/>
<path d="M533.0 198.0C534.0 194.7 536.7 184.0 539.0 178.0C541.3 172.0 544.3 166.7 547.0 162.0C549.7 157.3 552.7 153.7 555.0 150.0C557.3 146.3 559.2 143.7 561.0 140.0C562.8 136.3 565.2 130.0 566.0 128.0" stroke-width="1.03"/>
<path d="M526.0 206.0C528.2 204.8 535.5 202.0 539.0 199.0C542.5 196.0 544.7 192.2 547.0 188.0C549.3 183.8 551.1 178.7 553.0 174.0C554.9 169.3 557.2 163.7 558.5 160.0C559.8 156.3 559.8 154.9 560.8 151.6C561.8 148.3 563.1 144.1 564.2 140.3C565.3 136.5 566.6 132.9 567.6 129.0C568.6 125.1 569.6 119.0 570.0 117.0" stroke-width="2.07"/>
<path d="M564.0 164.0C564.4 163.0 565.3 160.2 566.5 158.0C567.7 155.8 569.7 154.0 571.0 150.5C572.3 147.0 573.3 141.5 574.4 137.0C575.5 132.5 576.6 127.0 577.8 123.3C579.0 119.6 580.5 117.2 581.5 115.0C582.5 112.8 582.9 112.2 583.8 110.0C584.6 107.8 585.4 104.5 586.6 102.0C587.8 99.5 590.1 97.8 591.2 95.3C592.3 92.8 593.1 90.2 593.4 87.3C593.7 84.4 593.1 79.5 593.0 78.0" stroke-width="2.07"/>
<path d="M571.0 160.0C571.9 159.2 574.5 157.7 576.6 155.0C578.7 152.3 581.5 147.6 583.4 143.7C585.3 139.8 586.9 135.1 588.0 131.3C589.1 127.5 589.7 124.2 590.2 121.0C590.8 117.8 591.1 114.8 591.3 112.0C591.5 109.2 590.9 106.8 591.2 104.0C591.6 101.2 592.8 97.7 593.4 95.0C594.0 92.3 594.7 89.2 595.0 88.0" stroke-width="1.50"/>
<path d="M564.0 164.0C565.3 163.5 569.1 162.1 572.0 161.0C574.9 159.9 578.5 159.1 581.2 157.3C583.9 155.6 586.1 152.9 588.0 150.5C589.9 148.1 591.2 145.2 592.5 142.6C593.8 139.9 595.0 137.8 595.9 134.6C596.8 131.4 597.5 127.1 598.1 123.3C598.7 119.5 599.2 115.9 599.3 112.0C599.4 108.1 598.9 104.2 598.5 100.0C598.1 95.8 597.4 90.7 597.0 87.0C596.6 83.3 596.2 79.5 596.0 78.0" stroke-width="3.31"/>
<path d="M594.5 78.0C594.7 80.3 595.3 89.7 595.5 92.0" stroke-width="4.69"/>
<path d="M168.8 257.5C170.6 258.1 176.0 259.2 180.0 261.2C184.0 263.3 188.3 267.7 192.5 270.0C196.7 272.3 200.4 274.0 205.0 275.0C209.6 276.0 215.0 275.4 220.0 276.2C225.0 277.1 230.0 278.1 235.0 280.0C240.0 281.9 245.4 284.6 250.0 287.5C254.6 290.4 258.8 294.6 262.5 297.5C266.2 300.4 268.8 301.7 272.5 305.0C276.2 308.3 281.7 313.3 285.0 317.5C288.3 321.7 290.8 325.4 292.5 330.0C294.2 334.6 293.8 340.0 295.0 345.0C296.2 350.0 297.9 355.1 300.0 360.0C302.1 364.9 306.2 372.1 307.5 374.5" stroke-width="3.04"/>
<path d="M168.8 281.2C172.3 282.1 182.3 284.2 190.0 286.2C197.7 288.3 207.5 290.6 215.0 293.8C222.5 296.9 228.8 301.5 235.0 305.0C241.2 308.5 247.5 311.9 252.5 315.0C257.5 318.1 261.7 320.0 265.0 323.8C268.3 327.5 270.6 332.3 272.5 337.5C274.4 342.7 275.0 350.0 276.2 355.0C277.5 360.0 279.0 364.2 280.0 367.5C281.0 370.8 282.1 373.3 282.5 374.5" stroke-width="2.76"/>
<path d="M168.8 304.5C171.5 305.0 179.0 305.5 185.0 307.5C191.0 309.5 198.8 313.1 205.0 316.2C211.2 319.4 216.7 322.5 222.5 326.2C228.3 330.0 235.0 334.8 240.0 338.8C245.0 342.7 249.6 346.0 252.5 350.0C255.4 354.0 256.5 358.4 257.5 362.5C258.5 366.6 258.5 372.5 258.8 374.5" stroke-width="2.76"/>
<path d="M168.8 317.5C170.2 319.4 174.0 325.2 177.5 328.8C181.0 332.3 185.0 335.4 190.0 338.8C195.0 342.1 202.1 345.2 207.5 348.8C212.9 352.3 218.3 356.7 222.5 360.0C226.7 363.3 230.0 366.3 232.5 368.8C235.0 371.2 236.7 373.5 237.5 374.5" stroke-width="2.76"/>
<path d="M384.0 336.0C383.3 331.7 381.7 317.7 380.0 310.0C378.3 302.3 376.7 295.7 374.0 290.0C371.3 284.3 367.0 278.5 364.0 276.0C361.0 273.5 358.3 274.7 356.0 275.0C353.7 275.3 352.7 277.3 350.0 278.0C347.3 278.7 342.8 277.5 340.0 279.0C337.2 280.5 334.0 283.5 333.0 287.0C332.0 290.5 332.5 295.8 334.0 300.0C335.5 304.2 338.3 308.7 342.0 312.0C345.7 315.3 351.3 317.3 356.0 320.0C360.7 322.7 365.7 325.2 370.0 328.0C374.3 330.8 380.0 335.5 382.0 337.0" stroke-width="2.76"/>
<path d="M386.0 334.0C385.7 330.0 384.3 317.3 384.0 310.0C383.7 302.7 383.7 295.7 384.0 290.0C384.3 284.3 385.0 279.1 386.0 276.0C387.0 272.9 387.7 272.4 390.0 271.6C392.3 270.8 396.7 270.9 400.0 271.0C403.3 271.1 407.3 271.4 410.0 272.4C412.7 273.4 415.2 274.7 416.0 277.0C416.8 279.3 414.5 282.5 415.0 286.0C415.5 289.5 418.8 294.0 419.0 298.0C419.2 302.0 418.2 306.3 416.0 310.0C413.8 313.7 409.7 316.7 406.0 320.0C402.3 323.3 397.0 327.0 394.0 330.0C391.0 333.0 389.0 336.7 388.0 338.0" stroke-width="2.76"/>
<path d="M387.0 339.0C388.8 337.2 394.2 332.2 398.0 328.0C401.8 323.8 406.3 317.2 410.0 314.0C413.7 310.8 416.7 309.7 420.0 309.0C423.3 308.3 427.8 308.5 430.0 310.0C432.2 311.5 433.3 314.7 433.0 318.0C432.7 321.3 430.5 326.3 428.0 330.0C425.5 333.7 421.7 337.8 418.0 340.0C414.3 342.2 410.0 342.8 406.0 343.0C402.0 343.2 397.2 341.5 394.0 341.0C390.8 340.5 388.2 340.2 387.0 340.0" stroke-width="2.76"/>
<path d="M390.0 334.0C391.7 333.3 396.7 332.7 400.0 330.0C403.3 327.3 407.7 321.0 410.0 318.0C412.3 315.0 413.3 313.0 414.0 312.0" stroke-width="1.38"/>
<path d="M385.0 341.0C382.5 339.2 374.8 333.5 370.0 330.0C365.2 326.5 360.7 322.0 356.0 320.0C351.3 318.0 346.3 319.2 342.0 318.0C337.7 316.8 333.2 313.5 330.0 313.0C326.8 312.5 325.0 313.2 323.0 315.0C321.0 316.8 319.2 321.2 318.0 324.0C316.8 326.8 315.3 329.3 316.0 332.0C316.7 334.7 319.3 337.5 322.0 340.0C324.7 342.5 327.7 345.8 332.0 347.0C336.3 348.2 342.7 347.7 348.0 347.0C353.3 346.3 359.0 344.0 364.0 343.0C369.0 342.0 374.5 341.3 378.0 341.0C381.5 340.7 383.8 341.0 385.0 341.0" stroke-width="2.76"/>
<path d="M385.0 343.0C382.5 343.3 375.8 344.0 370.0 345.0C364.2 346.0 356.0 347.7 350.0 349.0C344.0 350.3 338.2 351.7 334.0 353.0C329.8 354.3 326.7 354.8 325.0 357.0C323.3 359.2 323.5 363.3 324.0 366.0C324.5 368.7 324.3 372.0 328.0 373.0C331.7 374.0 340.3 372.7 346.0 372.0C351.7 371.3 357.3 370.7 362.0 369.0C366.7 367.3 370.7 364.8 374.0 362.0C377.3 359.2 380.2 355.2 382.0 352.0C383.8 348.8 384.5 344.5 385.0 343.0" stroke-width="2.76"/>
<path d="M386.0 343.0C386.7 344.5 389.2 348.5 390.0 352.0C390.8 355.5 391.0 360.3 391.0 364.0C391.0 367.7 390.2 372.7 390.0 374.4" stroke-width="2.21"/>
<path d="M404.0 374.4C404.3 372.3 405.2 366.1 406.0 362.0C406.8 357.9 407.3 350.7 409.0 350.0C410.7 349.3 414.2 355.0 416.0 358.0C417.8 361.0 419.7 365.3 420.0 368.0C420.3 370.7 418.3 373.3 418.0 374.4" stroke-width="2.21"/>
<path d="M410.0 374.4C410.3 372.0 412.0 363.7 412.0 360.0C412.0 356.3 410.3 353.3 410.0 352.0" stroke-width="1.38"/>
<path d="M432.5 374.5C434.2 372.9 438.8 368.5 442.5 365.0C446.2 361.5 450.8 357.1 455.0 353.8C459.2 350.4 463.5 347.5 467.5 345.0C471.5 342.5 475.4 341.2 478.8 338.8C482.1 336.2 484.4 332.9 487.5 330.0C490.6 327.1 493.8 323.5 497.5 321.2C501.2 319.0 506.2 318.5 510.0 316.2C513.8 314.0 516.7 310.6 520.0 307.5C523.3 304.4 526.7 299.8 530.0 297.5C533.3 295.2 536.2 294.2 540.0 293.8C543.8 293.3 548.8 294.6 552.5 295.0C556.2 295.4 559.2 296.9 562.5 296.2C565.8 295.6 569.6 293.1 572.5 291.2C575.4 289.4 576.9 287.9 580.0 285.0C583.1 282.1 587.8 278.2 591.0 274.0C594.2 269.8 596.7 265.0 599.0 260.0C601.3 255.0 603.3 248.3 605.0 244.0C606.7 239.7 607.8 236.7 609.0 234.0C610.2 231.3 611.5 229.0 612.0 228.0" stroke-width="3.17"/>
<path d="M457.5 374.5C459.6 373.1 465.8 369.1 470.0 366.2C474.2 363.4 478.8 360.4 482.5 357.5C486.2 354.6 489.2 351.7 492.5 348.8C495.8 345.8 499.2 342.7 502.5 340.0C505.8 337.3 508.8 334.8 512.5 332.5C516.2 330.2 520.8 327.7 525.0 326.2C529.2 324.8 533.3 324.8 537.5 323.8C541.7 322.7 545.8 321.9 550.0 320.0C554.2 318.1 558.3 315.6 562.5 312.5C566.7 309.4 570.8 305.2 575.0 301.2C579.2 297.3 584.5 291.5 587.5 288.8C590.5 286.0 591.1 287.1 593.0 285.0C594.9 282.9 597.0 278.8 599.0 276.0C601.0 273.2 603.3 271.0 605.0 268.0C606.7 265.0 607.8 260.7 609.0 258.0C610.2 255.3 611.5 253.0 612.0 252.0" stroke-width="2.48"/>
</g>
<g fill="#0a0806">
<path d="M221.2 218.0C223.6 222.8 228.1 227.0 229.5 225.0C231.2 223.3 226.3 219.5 221.2 218.0Z"/>
<path d="M242.5 212.5C245.3 218.3 250.5 223.9 252.0 222.0C253.9 220.5 248.3 215.3 242.5 212.5Z"/>
<path d="M211.2 226.2C213.2 230.9 217.3 235.2 218.8 233.2C220.5 231.6 216.1 227.9 211.2 226.2Z"/>
<path d="M240.0 230.0C242.6 235.0 247.4 239.5 248.8 237.5C250.5 235.8 245.3 231.8 240.0 230.0Z"/>
<path d="M260.0 233.8C261.9 238.6 265.9 243.1 267.5 241.2C269.4 239.7 264.9 235.6 260.0 233.8Z"/>
<path d="M215.0 245.0C217.6 249.8 222.4 254.0 223.8 252.0C225.4 250.3 220.2 246.5 215.0 245.0Z"/>
<path d="M232.5 242.5C235.0 247.9 239.7 253.1 241.2 251.2C243.1 249.7 237.9 245.0 232.5 242.5Z"/>
<path d="M252.5 248.8C255.0 254.2 259.7 259.4 261.2 257.5C263.1 256.0 257.9 251.2 252.5 248.8Z"/>
<path d="M230.0 261.2C232.6 266.2 237.4 270.7 238.8 268.8C240.5 267.1 235.3 263.0 230.0 261.2Z"/>
</g><g fill="#0a0806">
<circle cx="486.8" cy="282.0" r="1.68"/>
<circle cx="474.0" cy="291.8" r="2.80"/>
<circle cx="486.2" cy="296.0" r="1.68"/>
<circle cx="498.2" cy="294.2" r="1.46"/>
<circle cx="463.5" cy="306.2" r="1.68"/>
<circle cx="480.0" cy="310.0" r="2.02"/>
<circle cx="495.0" cy="310.0" r="2.46"/>
<circle cx="511.0" cy="307.0" r="1.68"/>
<circle cx="460.2" cy="320.8" r="1.68"/>
<circle cx="493.5" cy="319.2" r="1.68"/>
<circle cx="471.0" cy="327.5" r="2.46"/>
<circle cx="483.0" cy="327.5" r="2.02"/>
<circle cx="503.8" cy="331.2" r="2.46"/>
<circle cx="467.5" cy="342.5" r="1.68"/>
<circle cx="485.8" cy="344.5" r="2.24"/>
</g>
<g font-family="'Liberation Serif',serif" font-weight="bold" font-size="30.4" fill="#0a0806" stroke="#0a0806" stroke-width="0.5">
<text x="343.6 366.2 388 407.7 424 430.5" y="222.9">ARTS &amp;</text>
<text x="298.8 321.8 346.5 372 393.9 415.4 435.7 456.1 475.9" y="250">HANDCRAFT</text>
</g>
</g></svg>
<svg width="800" height="424" viewBox="0 0 800 424">
<g fill="#4c4c4c">
<path d="M5 37 A8.7 8.7 0 0 1 22.4 37 L18.5 37 A4.8 4.8 0 0 0 8.9 37 Z"/>
<path d="M13 29 Q20 25.5 27 29 L31 37 L22.4 37 Q21 31 13 29Z"/>
<path d="M31 30 a6.2 6.2 0 1 0 12.4 0 a6.2 6.2 0 1 0 -12.4 0 M34.7 30 a2.5 2.5 0 1 1 5 0 a2.5 2.5 0 1 1 -5 0" fill-rule="evenodd"/>
<circle cx="57.5" cy="31.5" r="6.3"/>
<path d="M65 26.3 L92.5 26.3 L90 37 L64 37 Q66 32 65 26.3Z"/>
</g>
<rect x="49.3" y="66.2" width="15.6" height="13" fill="#1c1c1c"/>
<g fill="none" stroke="#d2d2d2" stroke-width="1.2" stroke-linecap="round" stroke-linejoin="round">
<path d="M3.4 44.6H12.8M8.1 39.9V49.3" stroke-width="1.4"/><path d="M6.6 41.2L8.1 39.6L9.6 41.2M6.6 48L8.1 49.6L9.6 48M4.7 43.1L3.1 44.6L4.7 46.1M11.5 43.1L13.1 44.6L11.5 46.1" stroke-width="1.1"/>
<rect x="20.6" y="42.3" width="6.8" height="5" fill="#9a9a9a" stroke="none"/><rect x="19.4" y="41" width="9.4" height="7.6" stroke-dasharray="1.2 1" stroke-width="0.9"/>
<ellipse cx="40.6" cy="43" rx="4.3" ry="2.7" transform="rotate(-12 40.6 43)" stroke-width="1"/><path d="M37.7 45.2Q39.5 46.5 38.8 48.2Q38.4 49.3 39.8 49.8" stroke-width="1"/>
<path d="M55.3 42.4L62.3 49.6" stroke-width="1.3"/><path d="M54.6 41.6L53.2 40.2M54.6 41.6L56 40.3M54.6 41.6L53.4 43" stroke-width="0.9"/>
<path d="M70.5 40.2V47.6H77.6M68.9 41.8H76V49.2" stroke-width="1.3" stroke-linecap="butt"/>
<path d="M84.4 40.3H93.3V42.4H84.4Z" fill="#d2d2d2" stroke-width="0.6"/><path d="M89.6 42.6L87.3 45.2V48.6L90.6 49V42.6M84.6 46.6H87.2" stroke-width="1"/>
<path d="M3.2 63.3H12.8V60.6Q10.8 61.2 10.4 59.4Q10 57.4 11.8 57.8Q10.6 55.2 8 55.6Q5.2 56.2 5.2 59.8Q4.4 60.4 3.2 60.6Z" fill="#d2d2d2" stroke-width="0.5"/>
<path d="M21.2 58.2L24.8 55L28.6 59.2L24.4 62.8Z" fill="#d2d2d2" stroke-width="0.6"/><path d="M24.6 54.2V59.2" stroke="#3c3c3c" stroke-width="0.9"/><path d="M24.6 53.9V58.8M20.6 58.6Q19.6 60.4 20.3 61.6" stroke-width="1"/>
<path d="M44.6 54.6L39.4 61" stroke-width="1.5"/><path d="M38.9 61.2Q37.4 62.2 36.9 64Q39.3 63.8 40 62.2Z" fill="#d2d2d2" stroke-width="0.5"/>
<path d="M57 55.2L60.6 57.4L58.6 60.6L55 58.4Z" fill="#d2d2d2" stroke-width="0.5"/><path d="M54.4 59.3L57.8 61.5L57 62.7L53.6 60.6Z" fill="#8a8a8a" stroke="none"/><path d="M52.6 63.6H60.8" stroke="#8a8a8a" stroke-width="0.9"/>
<path d="M71.6 55.6Q72.8 54.4 74 55.6L73.6 59.6H72Z M69.2 61.2Q72.8 59.2 76.4 61.2V62.6H69.2Z" fill="#d2d2d2" stroke-width="0.5"/>
<circle cx="88.4" cy="61" r="3.2" fill="#d2d2d2" stroke="none"/><path d="M90.4 58.6L93.4 54.6" stroke-width="1.2"/>
<path d="M3.6 68.6V76.8M3.6 69.2Q8 67 9.6 69.4" stroke-width="0.9" stroke-dasharray="1.4 0.9"/><path d="M8.6 71.2H11.4V77.2H8.6Z" fill="#d2d2d2" stroke-width="0.4"/><path d="M9.2 69.6H10.8V71H9.2Z" fill="#d2d2d2" stroke="none"/>
<path d="M20.6 77L24.4 67.4L28.2 77M22 73.6H26.8" stroke-width="1.5" stroke-linecap="butt" stroke-linejoin="miter"/>
<path d="M42.8 68.4L38 75.6L37.4 77.2" stroke-width="1.2"/><path d="M41.6 68.2L44.2 70M43 67.4Q44.4 66.2 45 67.6Q45.2 68.6 44 69.4" stroke-width="1.3"/>
<circle cx="55.6" cy="71.2" r="2.9" stroke="#f2f2f2" stroke-width="1.3"/><path d="M57.8 73.6L60.6 76.8" stroke="#f2f2f2" stroke-width="1.6"/>
</g>
<g fill="#bdbdbd">
<path d="M14.6 49.0L14.6 50.6L13.0 50.6Z"/>
<path d="M30.8 49.0L30.8 50.6L29.2 50.6Z"/>
<path d="M47.0 49.0L47.0 50.6L45.4 50.6Z"/>
<path d="M63.4 49.0L63.4 50.6L61.8 50.6Z"/>
<path d="M95.6 49.0L95.6 50.6L94.0 50.6Z"/>
<path d="M14.6 63.4L14.6 65.0L13.0 65.0Z"/>
<path d="M30.8 63.4L30.8 65.0L29.2 65.0Z"/>
<path d="M47.0 63.4L47.0 65.0L45.4 65.0Z"/>
<path d="M79.4 63.4L79.4 65.0L77.8 65.0Z"/>
<path d="M95.6 63.4L95.6 65.0L94.0 65.0Z"/>
<path d="M47.0 77.4L47.0 79.0L45.4 79.0Z"/>
<path d="M63.4 77.4L63.4 79.0L61.8 79.0Z"/>
</g>
<rect x="47.5" y="87.9" width="9.8" height="9.2" fill="#fff" stroke="#2a2a2a" stroke-width="0.6"/>
<rect x="40.6" y="81.6" width="10" height="9.4" fill="#fff" stroke="#2a2a2a" stroke-width="0.6"/>
<path d="M52.8 83H55.6V85.8M52.9 82.2L52 83L52.9 83.8M54.8 85L55.6 86L56.4 85" fill="none" stroke="#cfcfcf" stroke-width="0.7"/>
<rect x="41.4" y="93" width="2.6" height="2.6" fill="#111"/><rect x="42.8" y="94.4" width="2.8" height="2.8" fill="#fff" stroke="#222" stroke-width="0.4"/>
</svg>
<svg width="800" height="424" viewBox="0 0 800 424"><g fill="none" stroke="#cfcfcf" stroke-width="0.8">
<rect x="2" y="103.2" width="4.8" height="3.6"/><path d="M2.6 108H6.2"/>
<path d="M10.6 107.4L13 103.2M11 105.4H13.4"/><circle cx="14" cy="106.4" r="1.2"/>
<path d="M18.4 105H22.6M19.8 103.6L18.4 105L19.8 106.4M22.6 105Q23.4 107.2 21.2 107.6"/>
<rect x="26.3" y="102.9" width="4.6" height="5.2" fill="#f0f0f0" stroke="none"/><rect x="26.3" y="102.9" width="4.6" height="1.6" fill="#e8a21a" stroke="none"/><rect x="27.4" y="105.2" width="2.4" height="1.8" fill="#e8a21a" stroke="none"/>
<rect x="91.4" y="103.4" width="4.4" height="4.4" stroke="#bdbdbd" stroke-width="0.7"/><path d="M94.6 104.4L92.8 105.6L94.6 106.8Z" fill="#cfcfcf" stroke="none"/>
<path d="M3.6 121.8L6 124.2M6 121.8L3.6 124.2" stroke="#fff" stroke-width="1"/>
<path d="M12.7 417.4V420.4M11.2 421.8H14.2M11.6 420.4H13.8" stroke-width="0.9"/>
<path d="M35.4 417.6H37A2.1 2.1 0 1 1 34.9 419.9M35.6 416.4L34.4 417.6L35.6 418.8" />
<rect x="57.6" y="417.2" width="5" height="5" fill="#d6d6d6" stroke="none"/><path d="M58.8 418.4L61.4 421M61.4 418.4L58.8 421" stroke="#333" stroke-width="0.9"/>
<path d="M83.6 421.8H82.4M85.6 417.4A2.2 2.2 0 1 1 83 421M85 416.2L86.2 417.4L85 418.6"/>
</g></svg>
<svg width="800" height="424" viewBox="0 0 800 424">
<rect x="684.9" y="27.4" width="6.2" height="6.2" rx="0.6" fill="#f2f2f2"/><circle cx="688" cy="30.5" r="1.7" fill="#1a1a1a"/>
<rect x="694" y="27.6" width="6" height="5.8" fill="#f2b54a"/>
<rect x="702.6" y="27.4" width="6.2" height="6.2" rx="0.6" fill="#f2f2f2"/><path d="M703.6 32L704.8 29L706 32M704 31H705.6M706.6 30.2H707.8V32M706.6 32H708" stroke="#333" stroke-width="0.5" fill="none"/>
<path d="M711.6 27.4H714.6L716.4 29.2V33.6H711.6Z" fill="#f2f2f2"/>
<path d="M724.4 27.6L720.6 32.6L720 33.8" stroke="#ececec" stroke-width="1" fill="none"/>
<rect x="793.4" y="28.2" width="4.4" height="4.4" fill="none" stroke="#bdbdbd" stroke-width="0.7"/><path d="M796.6 29.2L794.8 30.4L796.6 31.6Z" fill="#cfcfcf"/>
<path d="M800 136.4V139.4H797Z" fill="#4a7ff0"/>
<circle cx="709.7" cy="144.7" r="1.9" fill="#d8d8d8"/><rect x="717.2" y="142.8" width="3.8" height="3.8" fill="#d8d8d8"/><path d="M729 142.4L731.2 144.7L729 147L726.8 144.7Z" fill="#d8d8d8"/>
<path d="M795.2 153.3L796.6 151.9L798 153.3M795.2 155.3L796.6 156.7L798 155.3" fill="none" stroke="#5a5a5a" stroke-width="0.9"/>
<path d="M795.2 163.1L796.6 161.7L798 163.1M795.2 165.1L796.6 166.5L798 165.1" fill="none" stroke="#5a5a5a" stroke-width="0.9"/>
<path d="M795.2 172.9L796.6 171.5L798 172.9M795.2 174.9L796.6 176.3L798 174.9" fill="none" stroke="#5a5a5a" stroke-width="0.9"/>
<path d="M795.2 182.7L796.6 181.3L798 182.7M795.2 184.7L796.6 186.1L798 184.7" fill="none" stroke="#5a5a5a" stroke-width="0.9"/>
<path d="M795.2 192.4L796.6 191.0L798 192.4M795.2 194.4L796.6 195.8L798 194.4" fill="none" stroke="#5a5a5a" stroke-width="0.9"/>
<path d="M795.2 202.1L796.6 200.7L798 202.1M795.2 204.1L796.6 205.5L798 204.1" fill="none" stroke="#5a5a5a" stroke-width="0.9"/>
<path d="M795.2 237.4L796.6 236L798 237.4M795.2 239.6L796.6 241L798 239.6" fill="none" stroke="#d0d0d0" stroke-width="0.6"/>
<g fill="#d0d0d0"><rect x="739.8" y="207.8" width="1" height="1"/><rect x="741.9" y="207.8" width="1" height="1"/><rect x="744" y="207.8" width="1" height="1"/></g>
<path d="M685.4 212.8H689.4M685.4 214.8H689.4M685.4 216.8H689.4" stroke="#e8e8e8" stroke-width="0.9"/>
<rect x="707.6" y="212.6" width="4.2" height="5" fill="none" stroke="#d8d8d8" stroke-width="0.6"/><path d="M710.4 212.6V217.6" stroke="#d8d8d8" stroke-width="0.6"/>
<path d="M735.8 213.6Q737.4 212.4 738.6 214.6Q739.6 216.4 741 215" fill="none" stroke="#d8d8d8" stroke-width="0.7"/><rect x="735.2" y="213" width="1.4" height="1.4" fill="#d8d8d8"/><rect x="739.8" y="214.2" width="1.4" height="1.4" fill="#d8d8d8"/>
<rect x="793.4" y="212.8" width="4.4" height="4.4" fill="none" stroke="#bdbdbd" stroke-width="0.7"/><path d="M796.6 213.8L794.8 215L796.6 216.2Z" fill="#cfcfcf"/>
<g fill="none" stroke="#e0e0e0" stroke-width="0.8"><path d="M772.4 225.8L774.4 227.8L776.4 225.8M792 225.8L794 227.8L796 225.8"/><path d="M786.6 225.6A1.9 1.9 0 1 0 787 228.4M786 224.4L787 225.6L785.8 226.6"/></g>
<g fill="none" stroke="#d8d8d8" stroke-width="0.8"><path d="M725.4 245.8L722.4 250.4"/><path d="M731 248.2H736M733.5 245.7V250.7"/><rect x="741.2" y="246" width="4.2" height="4.2" stroke-dasharray="1 0.7" stroke-width="0.7"/><path d="M742 246.8L744.6 249.4M744.6 246.8L742 249.4" stroke-width="0.6"/></g>
<ellipse cx="690.6" cy="259.2" rx="2.2" ry="1.3" fill="none" stroke="#9a9a9a" stroke-width="0.6"/><circle cx="690.6" cy="259.2" r="0.6" fill="#9a9a9a"/>
<path d="M702.6 257.2V259.4M701.8 257.4A0.9 0.9 0 1 1 703.4 257.4M701.8 261.2A0.9 0.9 0 1 0 703.4 261.2V260" fill="none" stroke="#b0b0b0" stroke-width="0.6"/>
<path d="M687.6 283.2Q690.8 280.0 694 283.2Q690.8 286.4 687.6 283.2Z" fill="none" stroke="#e0e0e0" stroke-width="0.7"/><circle cx="690.8" cy="283.2" r="1" fill="#e0e0e0"/>
<path d="M687.6 295.4Q690.8 292.2 694 295.4Q690.8 298.6 687.6 295.4Z" fill="none" stroke="#e0e0e0" stroke-width="0.7"/><circle cx="690.8" cy="295.4" r="1" fill="#e0e0e0"/>
<rect x="708.8" y="268.5" width="5" height="5" rx="0.9" fill="#0c0c0c"/><path d="M709.9 271.0H712.7M711.3 269.6V272.4" stroke="#fff" stroke-width="1.1"/>
<rect x="708.8" y="280.7" width="5" height="5" rx="0.9" fill="#0c0c0c"/><path d="M709.9 283.2H712.7M711.3 281.8V284.6" stroke="#fff" stroke-width="1.1"/>
<rect x="708.8" y="292.9" width="5" height="5" rx="0.9" fill="#0c0c0c"/><path d="M709.9 295.4H712.7M711.3 294.0V296.8" stroke="#fff" stroke-width="1.1"/>
<rect x="716" y="265.4" width="15" height="10.6" fill="#111"/><rect x="716.8" y="266.2" width="13.4" height="9" fill="#808080" stroke="#3f9a98" stroke-width="0.9"/><path d="M718.2 267.6H720.6V269.6H718.2ZM723 267.6H725.4V269.6H723ZM727.6 267.6H729V269.6H727.6ZM720.6 269.6H723V271.6H720.6ZM725.4 269.6H727.6V271.6H725.4ZM718.2 271.6H720.6V273.6H718.2ZM723 271.6H725.4V273.6H723ZM727.6 271.6H729V273.6H727.6Z" fill="#5c5c5c"/>
<clipPath id="t2"><rect x="716.6" y="278" width="14" height="9.6"/></clipPath><rect x="716" y="277.4" width="15.2" height="10.8" fill="#111"/><rect x="716.6" y="278" width="14" height="9.6" fill="#f6f2e8"/><g clip-path="url(#t2)" fill="#dfa21c"><circle cx="720" cy="279.6" r="3.3"/><circle cx="727.6" cy="281" r="2.5"/><circle cx="723.4" cy="287.6" r="3.2"/></g>
<clipPath id="t3"><rect x="716.4" y="290.2" width="14.4" height="10"/></clipPath><rect x="716.4" y="290.2" width="14.4" height="10" fill="#f8f5ee"/><g clip-path="url(#t3)"><circle cx="729" cy="293.6" r="3.2" fill="#dfa21c"/><path d="M719 294.6H724M719 296H723" stroke="#d4d0c6" stroke-width="0.5"/></g>
<g fill="none" stroke="#d0d0d0" stroke-width="0.8">
<path d="M689.6 417.8H692.6V421.8H689.4V418.4Z"/>
<path d="M704 417.6H706.4L707.6 418.8V421.8H704Z" fill="#d0d0d0"/>
<path d="M717.6 420.6L719.6 418.6L721.6 420.6M732 418.8L734 420.8L736 418.8"/>
<rect x="746" y="417.6" width="2.8" height="2.8" stroke="#8a8a8a" stroke-width="0.6"/><rect x="747.6" y="419.2" width="2.8" height="2.8" stroke="#8a8a8a" stroke-width="0.6"/>
<path d="M760.6 418V421.6M763.4 418V421.6M762 420.6L763.4 421.8L764.8 420.6" stroke-width="0.9"/>
<path d="M774.4 418.2H778.4M774.4 419.8H777.4M774.4 421.4H778.6" stroke-width="1"/>
<rect x="788.6" y="417.4" width="4.8" height="4.8" fill="#d6d6d6" stroke="none"/><path d="M789.8 418.6L792.2 421M792.2 418.6L789.8 421" stroke="#333" stroke-width="0.9"/>
</g></svg>
</body></html>
